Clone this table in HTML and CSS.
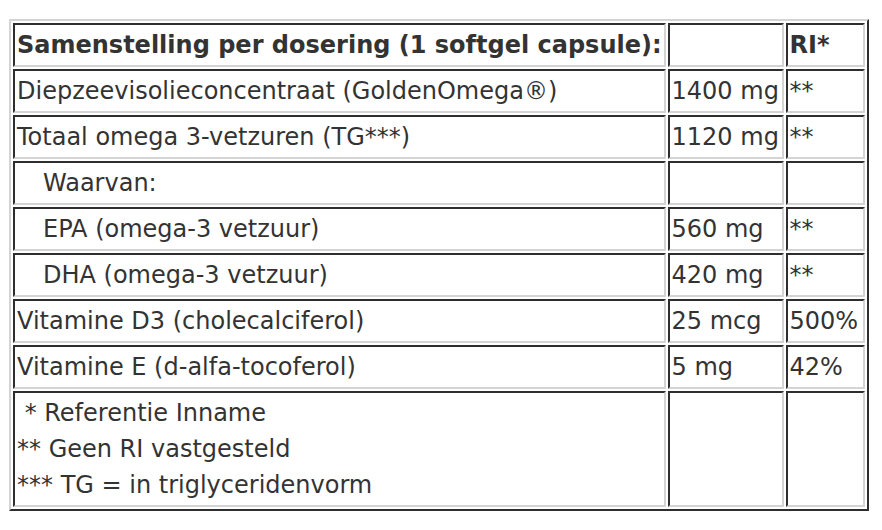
FILE: index.html
```html
<!DOCTYPE html>
<html lang="nl">
<head>
<meta charset="utf-8">
<title>Samenstelling</title>
<link rel="stylesheet" href="styles.css">
</head>
<body>
<table class="facts">
  <tr>
    <th>Samenstelling per dosering (1 softgel capsule):</th>
    <th class="amount"></th>
    <th class="ri">RI*</th>
  </tr>
  <tr>
    <td>Diepzeevisolieconcentraat (GoldenOmega®)</td>
    <td>1400 mg</td>
    <td>**</td>
  </tr>
  <tr>
    <td>Totaal omega 3-vetzuren (TG***)</td>
    <td>1120 mg</td>
    <td>**</td>
  </tr>
  <tr>
    <td class="sub">Waarvan:</td>
    <td></td>
    <td></td>
  </tr>
  <tr>
    <td class="sub">EPA (omega-3 vetzuur)</td>
    <td>560 mg</td>
    <td>**</td>
  </tr>
  <tr>
    <td class="sub">DHA (omega-3 vetzuur)</td>
    <td>420 mg</td>
    <td>**</td>
  </tr>
  <tr>
    <td>Vitamine D3 (cholecalciferol)</td>
    <td>25 mcg</td>
    <td>500%</td>
  </tr>
  <tr>
    <td>Vitamine E (d-alfa-tocoferol)</td>
    <td>5 mg</td>
    <td>42%</td>
  </tr>
  <tr>
    <td>&nbsp;* Referentie Inname<br>** Geen RI vastgesteld<br>*** TG = in triglyceridenvorm</td>
    <td></td>
    <td></td>
  </tr>
</table>
</body>
</html>
```
FILE: styles.css
```css
html, body {
  background: #ffffff;
}
body {
  margin: 19px 9px;
  font-family: "DejaVu Sans", Verdana, sans-serif;
  font-size: 24px;
  line-height: 36px;
  color: #333333;
}
.facts {
  border-collapse: separate;
  border-spacing: 2px;
  border-style: solid;
  border-width: 2px;
  border-color: #d4d4d4 #2e2e2e #2e2e2e #d4d4d4;
}
.facts th,
.facts td {
  padding: 2px;
  text-align: left;
  vertical-align: middle;
  border-style: solid;
  border-width: 2px;
  border-color: #2e2e2e #d4d4d4 #d4d4d4 #2e2e2e;
  white-space: nowrap;
}
.facts th {
  font-weight: bold;
}
.facts th.amount {
  width: 108px;
}
.facts th.ri {
  width: 71px;
}
.facts td.sub {
  padding-left: 28px;
}
```
